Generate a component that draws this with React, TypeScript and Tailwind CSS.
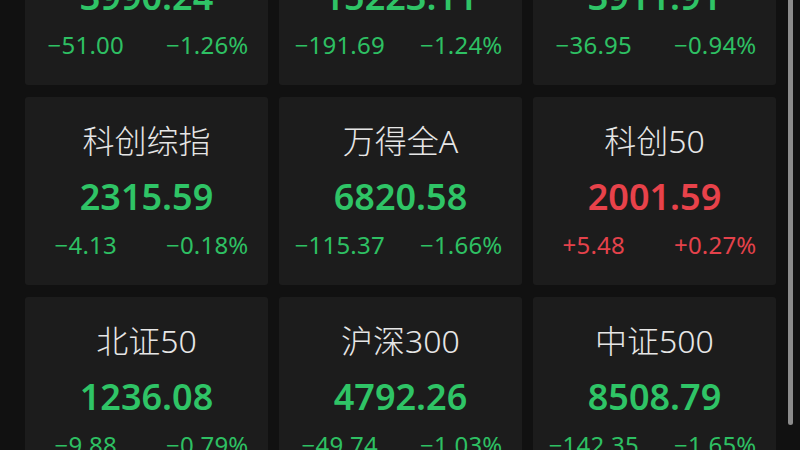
import React from "react";

type Quote = {
  name: string;
  price: string;
  change: string;
  pct: string;
  up?: boolean;
};

const quotes: Quote[] = [
  { name: "上证指数", price: "3990.24", change: "−51.00", pct: "−1.26%" },
  { name: "深证成指", price: "15223.11", change: "−191.69", pct: "−1.24%" },
  { name: "创业板指", price: "3911.91", change: "−36.95", pct: "−0.94%" },
  { name: "科创综指", price: "2315.59", change: "−4.13", pct: "−0.18%" },
  { name: "万得全A", price: "6820.58", change: "−115.37", pct: "−1.66%" },
  { name: "科创50", price: "2001.59", change: "+5.48", pct: "+0.27%", up: true },
  { name: "北证50", price: "1236.08", change: "−9.88", pct: "−0.79%" },
  { name: "沪深300", price: "4792.26", change: "−49.74", pct: "−1.03%" },
  { name: "中证500", price: "8508.79", change: "−142.35", pct: "−1.65%" },
];

function QuoteCard({ q }: { q: Quote }) {
  return (
    <div className="h-[188px] rounded-[3px] bg-[#1c1c1c] flex flex-col items-center pt-[28px]">
      <div className="text-[32px] leading-[32px] font-light text-[#e6e6e6]">{q.name}</div>
      <div
        className={`mt-[22px] text-[36px] leading-[36px] font-semibold ${
          q.up ? "text-[#e8424a]" : "text-[#2fc466]"
        }`}
      >
        {q.price}
      </div>
      <div
        className={`mt-[18px] w-full grid grid-cols-2 text-[24px] leading-[24px] font-normal tracking-[0.2px] ${
          q.up ? "text-[#e4424b]" : "text-[#2ec063]"
        }`}
      >
        <span className="text-center">{q.change}</span>
        <span className="text-center">{q.pct}</span>
      </div>
    </div>
  );
}

export default function App() {
  return (
    <div
      className="relative w-[800px] h-[450px] overflow-hidden bg-[#111111]"
      style={{ fontFamily: '"Noto Sans", "Noto Sans CJK SC", sans-serif' }}
    >
      <div className="mt-[-103px] pl-[25px] grid grid-cols-[243px_243px_243px] gap-x-[11px] gap-y-[12px]">
        {quotes.map((q) => (
          <QuoteCard key={q.name} q={q} />
        ))}
      </div>

      {/* scroll indicator */}
      <div className="absolute top-0 left-[788px] w-[5px] h-[425px] rounded-b-full bg-[#8c8c8c]" />
    </div>
  );
}
